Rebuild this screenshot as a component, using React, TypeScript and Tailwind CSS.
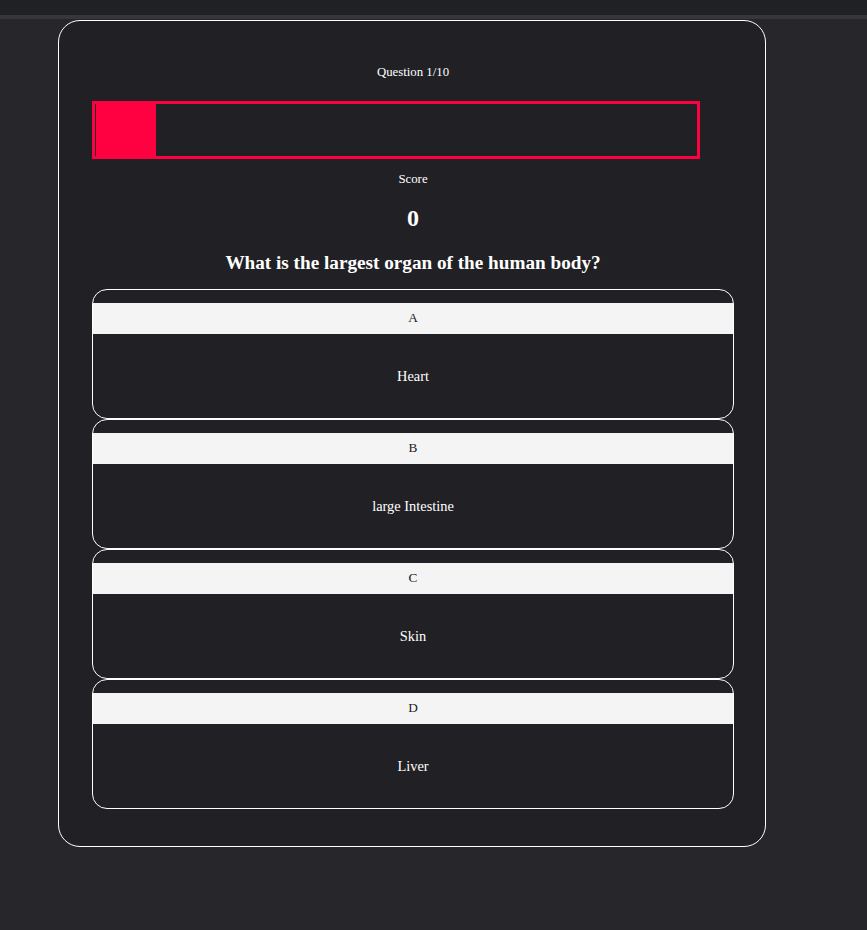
import React from "react";

const options = [
  { letter: "A", text: "Heart" },
  { letter: "B", text: "large Intestine" },
  { letter: "C", text: "Skin" },
  { letter: "D", text: "Liver" },
];

export default function App() {
  return (
    <div
      className="min-h-[930px] w-full bg-[#27272b] text-white"
      style={{ fontFamily: '"Liberation Serif", "Times New Roman", serif' }}
    >
      <div className="h-[15px] bg-[#202124]" />
      <div className="h-[4px] bg-[#36373b]" />
      <div className="ml-[58px] mt-[1px] w-[708px] rounded-[22px] border border-white bg-[#212125] pb-[37px] pl-[33px]">
        <div className="flex w-[642px] flex-col items-center">
          <div className="mt-[42px] flex h-[20px] items-center text-[12.8px]">Question 1/10</div>
          <div className="mt-[18px] flex h-[58px] w-[608px] self-start border-[3px] border-[#ff0040]">
            <div className="w-[1px] bg-[#212125]" />
            <div className="w-[60px] bg-[#ff0040]" />
          </div>
          <div className="mt-[11px] flex h-[20px] items-center text-[12.8px]">Score</div>
          <div className="mt-[13px] flex h-[30px] items-center text-[24px] font-bold">0</div>
          <div className="mt-[18px] flex h-[24px] items-center text-[19.2px] font-bold">
            What is the largest organ of the human body?
          </div>
          <div className="mt-[14px] flex w-full flex-col">
            {options.map((o) => (
              <div
                key={o.letter}
                className="flex h-[130px] w-full flex-col rounded-[15px] border border-white pt-[13px]"
              >
                <div className="flex h-[31px] items-center justify-center bg-[#f4f4f4] pb-[1px] text-[13.3px] text-[#202124]">
                  {o.letter}
                </div>
                <div className="flex flex-1 items-center justify-center pt-[2px] text-[14.4px]">{o.text}</div>
              </div>
            ))}
          </div>
        </div>
      </div>
    </div>
  );
}
